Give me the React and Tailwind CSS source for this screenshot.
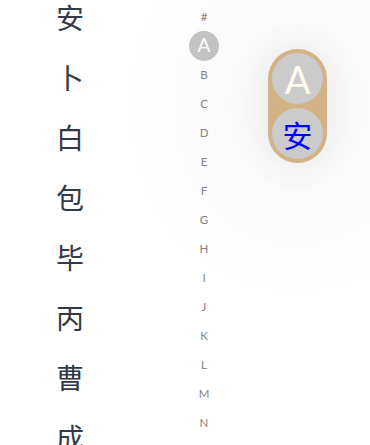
import React from 'react'

const NAMES = ['安', '卜', '白', '包', '毕', '丙', '曹', '成']
const LETTERS = ['#', 'A', 'B', 'C', 'D', 'E', 'F', 'G', 'H', 'I', 'J', 'K', 'L', 'M', 'N', 'O']

export default function App() {
  return (
    <div className="relative h-[445px] w-[370px] overflow-hidden bg-white">
      <div className="flex">
        {/* Name list */}
        <div className="-mt-[13px] flex w-[140px] flex-col">
          {NAMES.map((n) => (
            <div
              key={n}
              className="flex h-[60px] items-center justify-center text-[28px] text-[#323a45]"
              style={{ fontFamily: '"Noto Sans CJK SC", sans-serif' }}
            >
              {n}
            </div>
          ))}
        </div>

        {/* Index bar */}
        <div className="ml-[49px] flex w-[30px] flex-col pt-[2px] font-['Lato',sans-serif]">
          {LETTERS.map((l) =>
            l === 'A' ? (
              <div key={l} className="flex h-[29px] items-center justify-center">
                <span className="flex h-[30px] w-[30px] items-center justify-center rounded-full bg-[#c6c6c6] text-[19px] text-white">
                  A
                </span>
              </div>
            ) : (
              <div
                key={l}
                className="flex h-[29px] items-center justify-center text-[11.5px] text-[#858585]"
              >
                {l}
              </div>
            )
          )}
        </div>
      </div>

      {/* Floating indicator bubble */}
      <div className="absolute left-[268px] top-[49px] flex w-[59px] flex-col gap-[4px] rounded-full bg-[#d3b385] p-[4px] shadow-[0_0_30px_10px_rgba(0,0,0,0.04),0_0_130px_60px_rgba(0,0,0,0.045)]">
        <div className="flex h-[51px] w-[51px] items-center justify-center rounded-full bg-[#cbcbcb] font-['Lato',sans-serif] text-[38px] leading-none text-[#fffbea]">
          A
        </div>
        <div
          className="flex h-[51px] w-[51px] items-center justify-center rounded-full bg-[#cbcbcb] text-[30px] leading-none text-[#0000ff]"
          style={{ fontFamily: '"Noto Sans CJK SC", sans-serif' }}
        >
          安
        </div>
      </div>
    </div>
  )
}
